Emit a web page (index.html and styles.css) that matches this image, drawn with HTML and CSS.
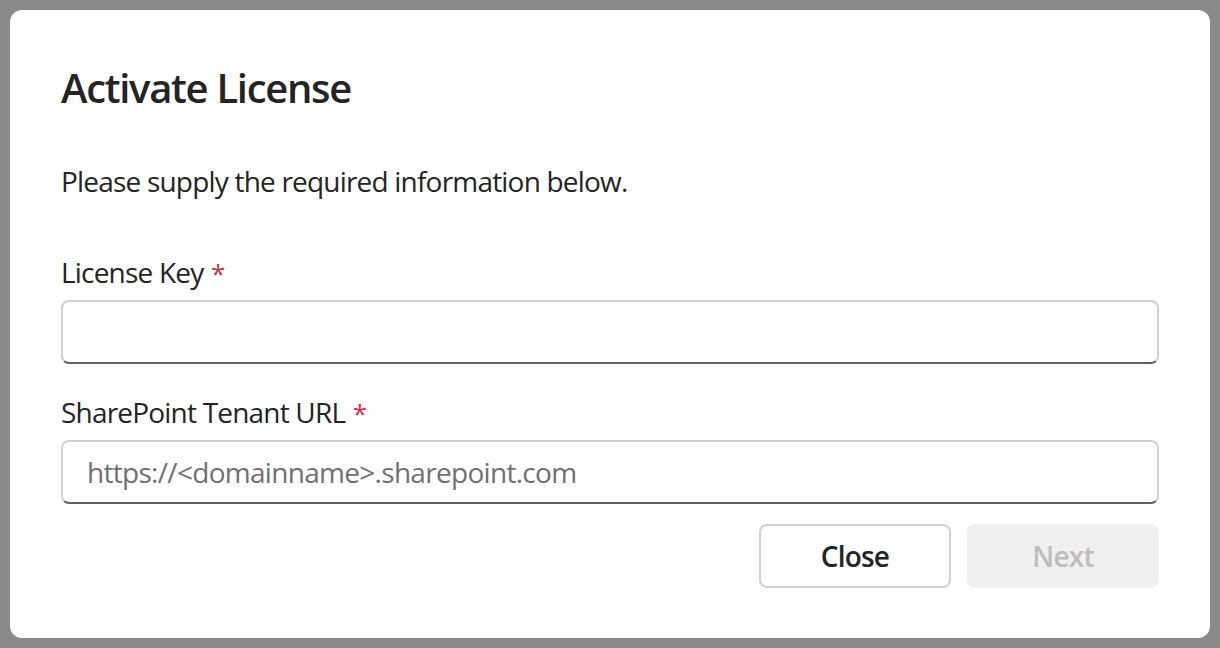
FILE: index.html
```html
<!DOCTYPE html>
<html lang="en">
<head>
    <meta charset="UTF-8">
    <meta name="viewport" content="width=device-width, initial-scale=1.0">
    <title>Activate License</title>
    <link rel="stylesheet" href="styles.css">
</head>
<body>
    <div class="dialog">
        <h2 class="dialog-title">Activate License</h2>

        <p class="dialog-text">Please supply the required information below.</p>

        <div class="field">
            <label for="licenseKey">License Key <span class="required">*</span></label>
            <input type="text" id="licenseKey" class="text-input">
        </div>

        <div class="field field-tenant">
            <label for="tenantUrl">SharePoint Tenant URL <span class="required">*</span></label>
            <input type="text" id="tenantUrl" class="text-input" placeholder="https://&lt;domainname&gt;.sharepoint.com">
        </div>

        <div class="actions">
            <button type="button" class="btn btn-secondary">Close</button>
            <button type="button" class="btn btn-primary" disabled>Next</button>
        </div>
    </div>
</body>
</html>
```

FILE: styles.css
```css
* {
    margin: 0;
    padding: 0;
    box-sizing: border-box;
}

body {
    font-family: "Segoe UI", "Open Sans", sans-serif;
    background: #8a8a8a;
    padding: 10px;
    color: #242424;
}

.dialog {
    background: #fff;
    border-radius: 12px;
    width: 1200px;
    height: 628px;
    padding: 50px 51px;
}

.dialog-title {
    font-size: 40px;
    line-height: 56px;
    font-weight: 600;
    letter-spacing: -1.3px;
}

.dialog-text {
    margin-top: 45px;
    font-size: 28px;
    line-height: 40px;
    letter-spacing: -0.8px;
}

.field {
    margin-top: 51px;
}

.field-tenant {
    margin-top: 28px;
}

label {
    display: block;
    height: 40px;
    font-size: 28px;
    line-height: 40px;
    letter-spacing: -0.8px;
    margin-bottom: 8px;
}

.required {
    color: #c4314b;
    font-size: 26px;
    line-height: 1;
    padding-left: 1px;
}

.text-input {
    display: block;
    width: 100%;
    height: 64px;
    border: 2px solid #d1d1d1;
    border-bottom-color: #616161;
    border-radius: 8px;
    padding: 0 24px;
    font-family: inherit;
    font-size: 28px;
    letter-spacing: -0.7px;
    color: #242424;
    outline: none;
}

.text-input::placeholder {
    color: #707070;
}

.actions {
    display: flex;
    justify-content: flex-end;
    gap: 16px;
    margin-top: 20px;
}

.btn {
    width: 192px;
    height: 64px;
    border-radius: 8px;
    font-family: inherit;
    font-size: 28px;
    font-weight: 600;
    letter-spacing: -0.8px;
}

.btn-secondary {
    background: #fff;
    border: 2px solid #d1d1d1;
    color: #242424;
}

.btn-primary {
    background: #f0f0f0;
    border: 2px solid transparent;
    color: #bdbdbd;
}
```
